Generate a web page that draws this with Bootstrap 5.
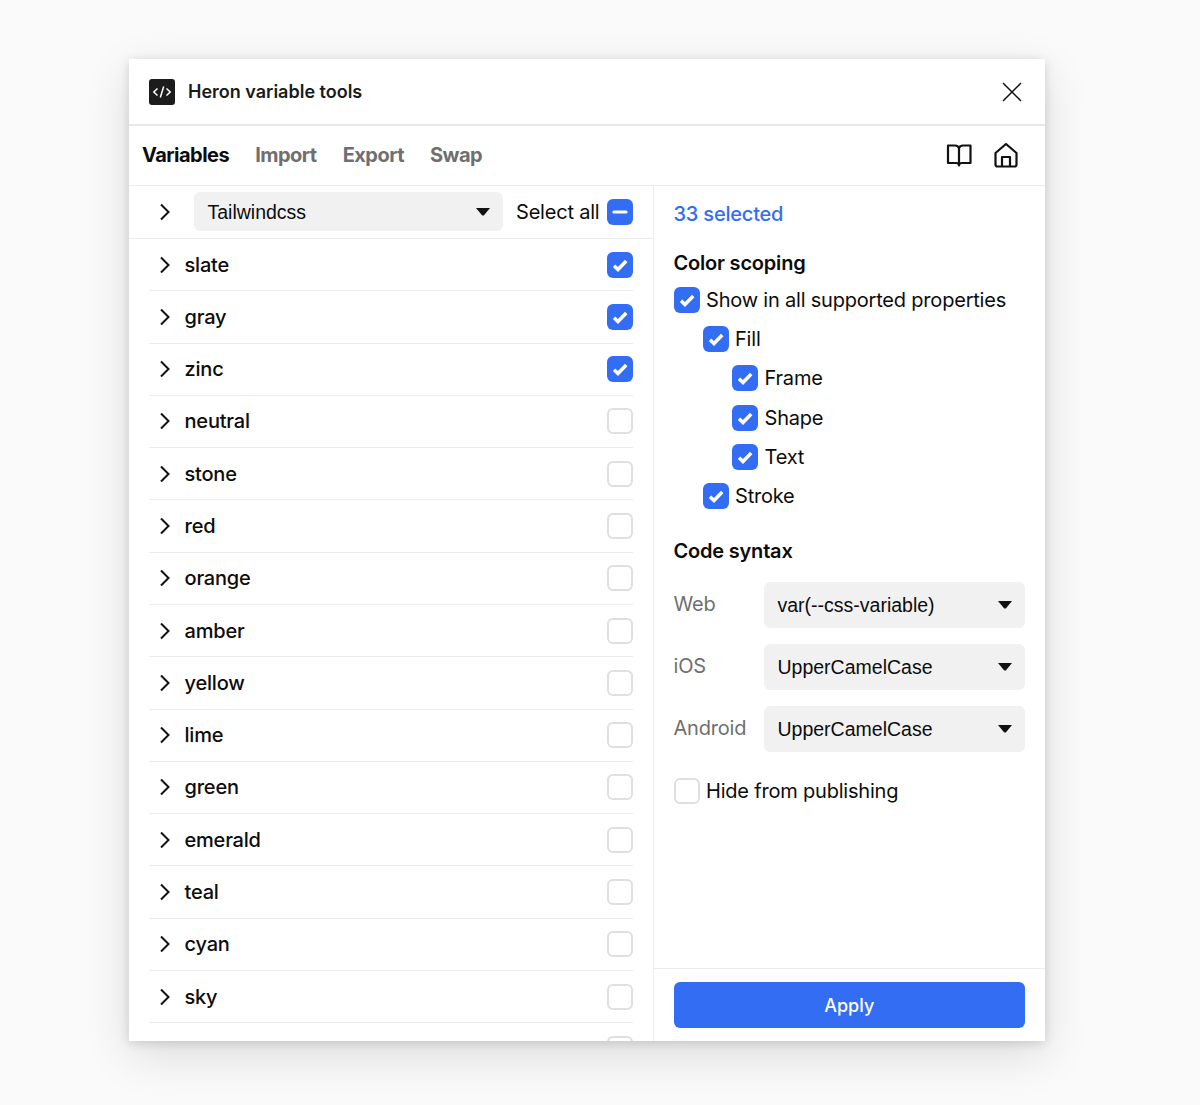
<!DOCTYPE html>
<html lang="en"><head><meta charset="utf-8"><title>Heron variable tools</title>
<link href="https://cdn.jsdelivr.net/npm/bootstrap@5.3.0/dist/css/bootstrap.min.css" rel="stylesheet">
<style>
html,body{height:100%;overflow:hidden}
body{background:#fafafa;font-family:Inter,"Liberation Sans",sans-serif;color:#0c0c0c;padding:59px 0 0 129px;font-size:20px;line-height:24px;letter-spacing:-.2px}
.defs{position:absolute}
.win{width:916px;height:982px;background:#fff;box-shadow:0 2px 10px rgba(0,0,0,.14),0 14px 44px rgba(0,0,0,.12);overflow:hidden}
.titlebar{height:67px;border-bottom:2px solid #e8e8e8;padding:0 23px 0 20px}
.logo{width:26px;height:26px;border-radius:3px;background:#1c1c1c}
.wtitle{font-size:18px;font-weight:600;margin-left:13px;color:#1a1a1a;letter-spacing:0}
.tabs{height:60px;border-bottom:1px solid #ececec;padding:0 27px 2px 13px}
.tabitem{font-weight:700;color:#6f6f6f;margin-right:26px;letter-spacing:-.52px}
.tabitem.on{color:#0c0c0c}
.icongap{gap:22px}
.panes{height:855px}
.lpane{width:525px;border-right:1px solid #ececec;flex:none}
.rpane{flex:1;min-width:0}
.tool{height:53px;border-bottom:1px solid #ececec;padding:0 20px 1px 25px}
.chev{flex:none;width:20px;height:20px}
.drop{background:#f1f1f1;border-radius:6px;height:39px;padding:0 13.500px;font-family:"Liberation Sans",Arial,sans-serif;font-size:19.500px;letter-spacing:0}
.tool .drop{width:309px;margin:0 13px 0 20px}
.drop .cap{width:14px;height:8px;flex:none}
.lrow{height:52.29px;margin:0 20px;border-bottom:1px solid #ececec;padding-left:5px}
.lrow .nm{margin-left:10.500px;font-weight:500}
.tick{width:26px;height:26px;border-radius:6px;flex:none;display:block}
.tick.off{border:2px solid #dfdfdf;background:#fff}
.tick.on{background:#336df4}
.rbody{padding:16px 20px 0 19.500px;flex:1}
.count{color:#336df4;font-weight:500;height:24px}
.sect{font-weight:600;margin-top:25px;height:24px}
.sect1{margin-bottom:5.500px}
.sect2{margin-top:23.500px;margin-bottom:19px}
.ck{height:39.2px;gap:6.500px}
.ind1{padding-left:29px}.ind2{padding-left:58.500px}
.syn{height:46px;margin-bottom:16px}
.syn .lb{width:90.500px;color:#6f6f6f;margin-top:-2px;flex:none}
.syn .drop{height:46px;flex:1}
.ckend{margin-top:19px}
.rfoot{height:73px;border-top:1px solid #ececec;padding:13px 20px 0 19.500px}
.applybtn{height:46px;width:100%;background:#336df4;color:#fff;font-size:18px;font-weight:500;border-radius:6px;border:0;padding:0;display:block}
</style></head>
<body>
<svg width="0" height="0" class="defs"><defs>
<symbol id="c" viewBox="0 0 20 20"><path d="M7 2.500 14.500 10 7 17.500" fill="none" stroke="#111" stroke-width="2"/></symbol>
<symbol id="t" viewBox="0 0 26 26"><path d="M7 13.700 11 17.500 19.200 9" fill="none" stroke="#fff" stroke-width="3.500"/></symbol>
<symbol id="d" viewBox="0 0 14 8"><path d="M0 0H14L8 7.200Q7 8 6 7.200Z" fill="#111"/></symbol>
</defs></svg>
<div class="win d-flex flex-column">
  <div class="titlebar d-flex align-items-center">
    <svg class="logo" viewBox="0 0 26 26"><path d="M8.500 9.500 4.800 13 8.500 16.500M17.500 9.500 21.200 13 17.500 16.500M14.700 7.500 11.300 18.500" fill="none" stroke="#fff" stroke-width="1.500"/></svg>
    <span class="wtitle flex-grow-1">Heron variable tools</span>
    <svg width="20" height="20" viewBox="0 0 20 20"><path d="M1 1 19 19M19 1 1 19" stroke="#111" stroke-width="1.500" fill="none"/></svg>
  </div>
  <div class="tabs d-flex align-items-center">
    <span class="tabitem on">Variables</span><span class="tabitem">Import</span><span class="tabitem">Export</span><span class="tabitem">Swap</span>
    <span class="ms-auto d-flex align-items-center icongap">
      <svg width="26" height="24" viewBox="0 0 26 24"><path d="M2 2.500V20H10Q13 20 13 22.500 13 20 16 20H24.500V2.500H17Q14 2.500 13 5 12 2.500 9 2.500ZM13 5V22.500" fill="none" stroke="#111" stroke-width="2.200" stroke-linejoin="round"/></svg>
      <svg width="24" height="26" viewBox="0 0 24 26"><path d="M1.500 11 12 2 22.500 11V22.500Q22.500 24.500 20.500 24.500H3.500Q1.500 24.500 1.500 22.500ZM8 24.500V15H16V24.500" fill="none" stroke="#111" stroke-width="2.200" stroke-linejoin="round"/></svg>
    </span>
  </div>
  <div class="panes d-flex">
    <div class="lpane">
      <div class="tool d-flex align-items-center">
        <svg class="chev"><use href="#c"/></svg>
        <div class="drop d-flex align-items-center justify-content-between"><span>Tailwindcss</span><svg class="cap"><use href="#d"/></svg></div>
        <span class="flex-grow-1">Select all</span>
        <svg class="tick on" viewBox="0 0 26 26"><path d="M7 13H19" stroke="#fff" stroke-width="3.200" stroke-linecap="round"/></svg>
      </div>
      <div class="lrow d-flex align-items-center"><svg class="chev"><use href="#c"/></svg><span class="nm flex-grow-1">slate</span><svg class="tick on"><use href="#t"/></svg></div>
      <div class="lrow d-flex align-items-center"><svg class="chev"><use href="#c"/></svg><span class="nm flex-grow-1">gray</span><svg class="tick on"><use href="#t"/></svg></div>
      <div class="lrow d-flex align-items-center"><svg class="chev"><use href="#c"/></svg><span class="nm flex-grow-1">zinc</span><svg class="tick on"><use href="#t"/></svg></div>
      <div class="lrow d-flex align-items-center"><svg class="chev"><use href="#c"/></svg><span class="nm flex-grow-1">neutral</span><span class="tick off"></span></div>
      <div class="lrow d-flex align-items-center"><svg class="chev"><use href="#c"/></svg><span class="nm flex-grow-1">stone</span><span class="tick off"></span></div>
      <div class="lrow d-flex align-items-center"><svg class="chev"><use href="#c"/></svg><span class="nm flex-grow-1">red</span><span class="tick off"></span></div>
      <div class="lrow d-flex align-items-center"><svg class="chev"><use href="#c"/></svg><span class="nm flex-grow-1">orange</span><span class="tick off"></span></div>
      <div class="lrow d-flex align-items-center"><svg class="chev"><use href="#c"/></svg><span class="nm flex-grow-1">amber</span><span class="tick off"></span></div>
      <div class="lrow d-flex align-items-center"><svg class="chev"><use href="#c"/></svg><span class="nm flex-grow-1">yellow</span><span class="tick off"></span></div>
      <div class="lrow d-flex align-items-center"><svg class="chev"><use href="#c"/></svg><span class="nm flex-grow-1">lime</span><span class="tick off"></span></div>
      <div class="lrow d-flex align-items-center"><svg class="chev"><use href="#c"/></svg><span class="nm flex-grow-1">green</span><span class="tick off"></span></div>
      <div class="lrow d-flex align-items-center"><svg class="chev"><use href="#c"/></svg><span class="nm flex-grow-1">emerald</span><span class="tick off"></span></div>
      <div class="lrow d-flex align-items-center"><svg class="chev"><use href="#c"/></svg><span class="nm flex-grow-1">teal</span><span class="tick off"></span></div>
      <div class="lrow d-flex align-items-center"><svg class="chev"><use href="#c"/></svg><span class="nm flex-grow-1">cyan</span><span class="tick off"></span></div>
      <div class="lrow d-flex align-items-center"><svg class="chev"><use href="#c"/></svg><span class="nm flex-grow-1">sky</span><span class="tick off"></span></div>
      <div class="lrow d-flex align-items-center"><span class="flex-grow-1"></span><span class="tick off"></span></div>
    </div>
    <div class="rpane d-flex flex-column">
      <div class="rbody">
        <div class="count">33 selected</div>
        <div class="sect sect1">Color scoping</div>
        <div class="ck d-flex align-items-center"><svg class="tick on"><use href="#t"/></svg><span>Show in all supported properties</span></div>
        <div class="ck ind1 d-flex align-items-center"><svg class="tick on"><use href="#t"/></svg><span>Fill</span></div>
        <div class="ck ind2 d-flex align-items-center"><svg class="tick on"><use href="#t"/></svg><span>Frame</span></div>
        <div class="ck ind2 d-flex align-items-center"><svg class="tick on"><use href="#t"/></svg><span>Shape</span></div>
        <div class="ck ind2 d-flex align-items-center"><svg class="tick on"><use href="#t"/></svg><span>Text</span></div>
        <div class="ck ind1 d-flex align-items-center"><svg class="tick on"><use href="#t"/></svg><span>Stroke</span></div>
        <div class="sect sect2">Code syntax</div>
        <div class="syn d-flex align-items-center"><span class="lb">Web</span><div class="drop d-flex align-items-center justify-content-between"><span>var(--css-variable)</span><svg class="cap"><use href="#d"/></svg></div></div>
        <div class="syn d-flex align-items-center"><span class="lb">iOS</span><div class="drop d-flex align-items-center justify-content-between"><span>UpperCamelCase</span><svg class="cap"><use href="#d"/></svg></div></div>
        <div class="syn d-flex align-items-center"><span class="lb">Android</span><div class="drop d-flex align-items-center justify-content-between"><span>UpperCamelCase</span><svg class="cap"><use href="#d"/></svg></div></div>
        <div class="ck ckend d-flex align-items-center"><span class="tick off"></span><span>Hide from publishing</span></div>
      </div>
      <div class="rfoot"><button class="btn applybtn" type="button">Apply</button></div>
    </div>
  </div>
</div>
</body></html>
